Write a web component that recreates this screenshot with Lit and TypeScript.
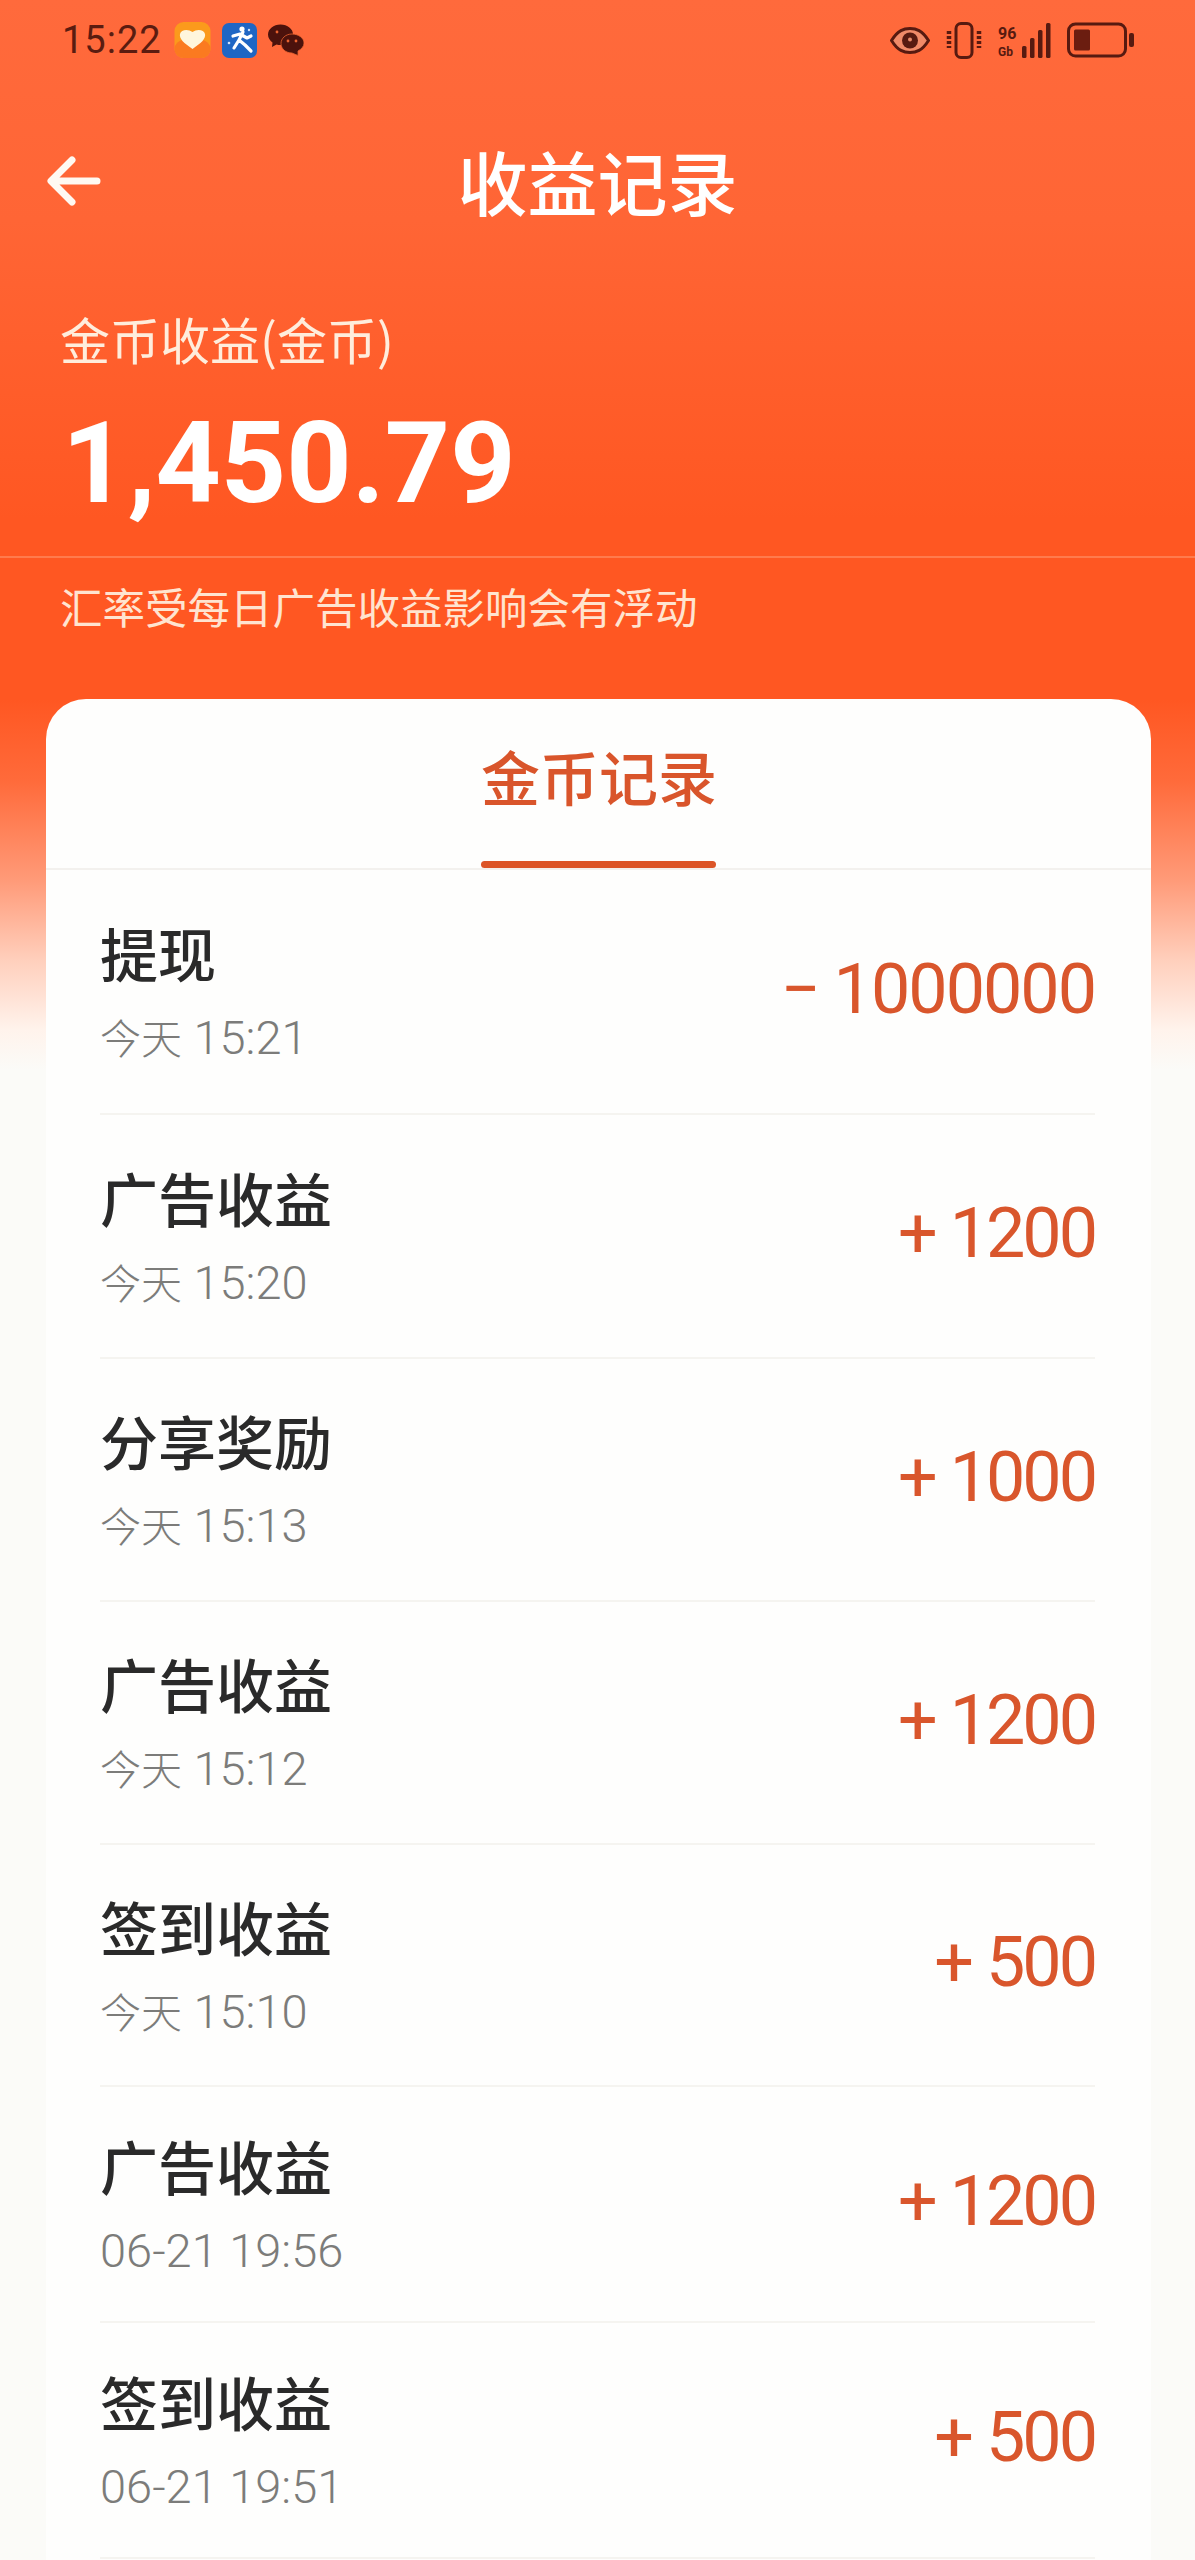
import { LitElement, html, css, svg } from "lit";
import { customElement } from "lit/decorators.js";
import { classMap } from "lit/directives/class-map.js";

const rows = [
  { t: "提现", c: "今天", d: " 15:21", a: "−", n: "1000000", h: 245 },
  { t: "广告收益", c: "今天", d: " 15:20", a: "+", n: "1200", h: 244 },
  { t: "分享奖励", c: "今天", d: " 15:13", a: "+", n: "1000", h: 243 },
  { t: "广告收益", c: "今天", d: " 15:12", a: "+", n: "1200", h: 243 },
  { t: "签到收益", c: "今天", d: " 15:10", a: "+", n: "500", h: 242 },
  { t: "广告收益", c: "", d: "06-21 19:56", a: "+", n: "1200", h: 236 },
  { t: "签到收益", c: "", d: "06-21 19:51", a: "+", n: "500", h: 236 },
];

const heart = html`<svg class="ic" width="37" height="36" viewBox="0 0 37 36">
  <rect x="0.5" y="0" width="36" height="36" rx="9" fill="#fb9a1c"/>
  <rect x="0.5" y="18" width="36" height="18" rx="9" fill="#fb7a20"/>
  <path d="M18.5 27 C10 21 5 17 6 12 C7 7.500 14 6.500 18.500 10 C23 6.500 30 7.500 31 12 C32 17 27 21 18.500 27Z" fill="#fff6dc"/>
</svg>`;

const runner = html`<svg class="ic" width="35" height="35" viewBox="0 0 35 35">
  <rect width="35" height="35" rx="7" fill="#1f66c4"/>
  <circle cx="20" cy="6" r="2.600" fill="#fff"/>
  <path d="M21 9 L17 17 L23 22 L29 28 M17 17 L12 25 M11 13 L18 11 L25 15 L29 13" fill="none" stroke="#fff" stroke-width="3.200" stroke-linecap="round" stroke-linejoin="round"/>
  <circle cx="7" cy="20" r="1.300" fill="#cfe2fa"/><circle cx="27" cy="7" r="1.200" fill="#cfe2fa"/>
</svg>`;

const wechat = html`<svg class="ic" width="36" height="32" viewBox="0 0 36 32">
  <path d="M12.500 0.500 C5.500 0.500 0 5 0 10.500 C0 14 2 16.500 4.500 18.500 L4 23 L8.500 20.500 C10 21 11 21 12.500 21 C19.500 21 25 16 25 10.500 C25 5 19.500 0.500 12.500 0.500Z" fill="#4c120c"/>
  <path d="M24 10 C17.500 10 13 14.500 13 19.500 C13 25 18 29 24 29 L30 31.500 L30 27 C33.500 25 36 22.500 36 19 C36 14 30.500 10 24 10Z" fill="#4c120c" stroke="#e8622f" stroke-width="0.800"/>
  <circle cx="20" cy="17" r="1.400" fill="#e8622f"/><circle cx="28" cy="17" r="1.400" fill="#e8622f"/>
  <circle cx="9" cy="8" r="1.400" fill="#e8622f"/>
</svg>`;

const eye = html`<svg class="st" width="40" height="27" viewBox="0 0 40 27">
  <path d="M1.500 13.500 C8 3 14 1.500 20 1.500 C26 1.500 32 3 38.500 13.500 C32 24 26 25.500 20 25.500 C14 25.500 8 24 1.500 13.500Z" fill="#f08a68" stroke="#571a10" stroke-width="3"/>
  <circle cx="20" cy="13.500" r="8" fill="#571a10"/><circle cx="20" cy="12.500" r="2" fill="#e88a6a"/>
</svg>`;

const vib = html`<svg class="st" width="38" height="37" viewBox="0 0 38 37">
  <rect x="11" y="1.500" width="16" height="34" rx="5" fill="none" stroke="#571a10" stroke-width="3"/>
  <path d="M4 9 V26 M34 9 V26" stroke="#571a10" stroke-width="4.500" stroke-dasharray="3 2" fill="none"/>
</svg>`;

const signal = html`<div class="sig">
  <div class="sigt"><span class="s1">96</span><span class="s2">Gb</span></div>
  <svg width="30" height="36" viewBox="0 0 30 36">
    ${[12, 20, 28, 35].map(
      (h, i) => svg`<rect x=${i * 8} y=${36 - h} width="4.500" height=${h} rx="1.500" fill="#571a10"/>`
    )}
  </svg>
</div>`;

const battery = html`<svg class="st" width="68" height="36" viewBox="0 0 68 36">
  <rect x="1.500" y="2" width="57" height="32" rx="7" fill="none" stroke="#571a10" stroke-width="3"/>
  <rect x="7" y="7.500" width="16" height="21" rx="1.500" fill="#6b1d10"/>
  <rect x="62" y="11" width="5" height="14" rx="2" fill="#571a10"/>
</svg>`;

@customElement("app-root")
export class AppRoot extends LitElement {
  static styles = css`
    :host {
      display: block;
      width: 1195px;
      height: 2560px;
      overflow: hidden;
      font-family: "Noto Sans CJK SC", "Noto Sans", sans-serif;
      background: linear-gradient(
        180deg,
        #ff6a3c 0,
        #ff6535 220px,
        #ff5722 520px,
        #ff5722 700px,
        #ff6a3a 780px,
        #ff9a78 880px,
        #ffcfbc 960px,
        #fff3ec 1030px,
        #fbfbf8 1070px
      );
    }
    .status {
      height: 80px;
      padding: 0 60px 0 62px;
      display: flex;
      align-items: center;
      justify-content: space-between;
      box-sizing: border-box;
    }
    .sl,
    .sr {
      display: flex;
      align-items: center;
    }
    .time {
      font-family: Roboto, sans-serif;
      font-size: 38px;
      color: #5a1c10;
      margin-right: 12px;
      letter-spacing: 1px;
    }
    .ic {
      margin-right: 11px;
      display: block;
    }
    .sr {
      gap: 15px;
    }
    .st {
      display: block;
    }
    .sig {
      display: flex;
      align-items: flex-end;
      gap: 2px;
    }
    .sigt {
      display: flex;
      flex-direction: column;
      font-family: Roboto, sans-serif;
      font-weight: 700;
      color: #571a10;
      line-height: 1;
      width: 22px;
    }
    .s1 {
      font-size: 16px;
      margin-bottom: 4px;
    }
    .s2 {
      font-size: 12px;
    }
    .nav {
      height: 104px;
      margin-top: 49px;
      position: relative;
      display: flex;
      align-items: center;
      justify-content: center;
    }
    .back {
      position: absolute;
      left: 43px;
      top: 22px;
    }
    .title {
      font-size: 70px;
      font-weight: 500;
      color: #fff;
      line-height: 1;
    }
    .sum {
      padding: 0 60px;
      box-sizing: border-box;
    }
    .label {
      font-size: 50px;
      color: #ffeddc;
      line-height: 60px;
      margin-top: 75px;
    }
    .big {
      font-family: Roboto, sans-serif;
      font-size: 114px;
      font-weight: 700;
      color: #fff;
      line-height: 130px;
      margin-top: 30px;
      margin-left: 2px;
    }
    .rule {
      height: 2px;
      background: #ff7b4d;
      margin-top: 28px;
    }
    .note {
      padding: 0 60px;
      font-size: 42.500px;
      line-height: 60px;
      color: #ffe4d0;
      margin-top: 18px;
    }
    .card {
      margin: 63px 44px 0 46px;
      background: #fefefd;
      border-radius: 40px 40px 0 0;
      height: 1900px;
    }
    .tabs {
      height: 169px;
      border-bottom: 2px solid #f3f1ee;
      display: flex;
      justify-content: center;
    }
    .tab {
      position: relative;
      width: 235px;
      text-align: center;
      white-space: nowrap;
      font-size: 59px;
      font-weight: 500;
      color: #d9552b;
      line-height: 1;
      padding-top: 47px;
    }
    .tab::after {
      content: "";
      position: absolute;
      left: 0;
      right: 0;
      bottom: 0;
      height: 7px;
      border-radius: 4px;
      background: #dc5527;
    }
    .list {
      padding: 0 56px 0 54px;
    }
    .row {
      display: flex;
      align-items: center;
      justify-content: space-between;
      border-bottom: 2px solid #f5f4f0;
      box-sizing: border-box;
    }
    .txt {
      display: flex;
      flex-direction: column;
      gap: 23px;
      margin-top: -2px;
    }
    .name {
      font-size: 58px;
      font-weight: 500;
      color: #2a2a2a;
      line-height: 70px;
    }
    .date {
      font-family: Roboto, "Noto Sans CJK SC", sans-serif;
      font-size: 47px;
      font-weight: 300;
      color: #7c7c7a;
      line-height: 52px;
      white-space: pre;
    }
    .cn {
      font-family: "Noto Sans CJK SC", sans-serif;
      font-size: 41px;
      font-weight: 300;
    }
    .amt {
      font-family: Roboto, sans-serif;
      font-size: 70px;
      letter-spacing: -3px;
      color: #d9562c;
      display: flex;
      gap: 15px;
      align-items: center;
      line-height: 1;
      margin-top: -6px;
    }
    .amt.long {
      letter-spacing: -2px;
    }
    .sign {
      font-weight: 400;
    }
  `;

  render() {
    return html`
      <div class="status">
        <div class="sl"><span class="time">15:22</span>${heart}${runner}${wechat}</div>
        <div class="sr">${eye}${vib}${signal}${battery}</div>
      </div>
      <div class="nav">
        <svg class="back" width="60" height="60" viewBox="0 0 60 60">
          <path d="M9 30 H54 M29 9 L8 30 L29 51" fill="none" stroke="#fff9f2" stroke-width="7" stroke-linecap="round" stroke-linejoin="round"/>
        </svg>
        <div class="title">收益记录</div>
      </div>
      <div class="sum">
        <div class="label">金币收益(金币)</div>
        <div class="big">1,450.79</div>
      </div>
      <div class="rule"></div>
      <div class="note">汇率受每日广告收益影响会有浮动</div>
      <div class="card">
        <div class="tabs"><div class="tab">金币记录</div></div>
        <div class="list">
          ${rows.map(
            (r) => html`<div class="row" style="height:${r.h}px">
              <div class="txt">
                <div class="name">${r.t}</div>
                <div class="date"><span class="cn">${r.c}</span>${r.d}</div>
              </div>
              <div class=${classMap({ amt: true, long: r.n.length > 4 })}>
                <span class="sign">${r.a}</span><span>${r.n}</span>
              </div>
            </div>`
          )}
        </div>
      </div>
    `;
  }
}
